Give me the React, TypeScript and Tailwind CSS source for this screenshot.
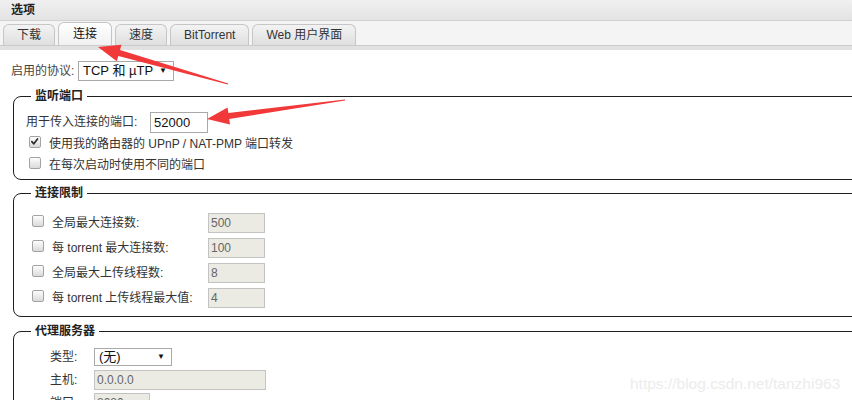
import React from "react";

type Pt = [number, number];

function arrowPoints(tail: Pt, tip: Pt, headLen = 22, headW = 17, shaftW = 6): string {
  const dx = tip[0] - tail[0];
  const dy = tip[1] - tail[1];
  const len = Math.hypot(dx, dy);
  const ux = dx / len;
  const uy = dy / len;
  const nx = -uy;
  const ny = ux;
  const bx = tip[0] - ux * headLen;
  const by = tip[1] - uy * headLen;
  const neck = (w: number): Pt[] => [
    [bx + (nx * w) / 2, by + (ny * w) / 2],
    [bx - (nx * w) / 2, by - (ny * w) / 2],
  ];
  const [s1, s2] = neck(shaftW);
  const [h1, h2] = neck(headW);
  const pts: Pt[] = [
    [tail[0] + nx * 0.6, tail[1] + ny * 0.6],
    s1,
    h1,
    tip,
    h2,
    s2,
    [tail[0] - nx * 0.6, tail[1] - ny * 0.6],
  ];
  return pts.map((p) => `${p[0].toFixed(1)},${p[1].toFixed(1)}`).join(" ");
}

function Checkbox({ checked = false }: { checked?: boolean }) {
  return (
    <span className="relative inline-block w-[12px] h-[12px] shrink-0 rounded-[2px] border border-[#a3a3a3] bg-linear-to-b from-[#fdfdfd] to-[#dadada]">
      {checked && (
        <svg viewBox="0 0 12 12" className="absolute left-[0px] top-[0px] w-[10px] h-[10px]">
          <path d="M2.2 5.6 L4.6 8.2 L9 2.4" fill="none" stroke="#2b2b2b" strokeWidth="2" strokeLinecap="round" strokeLinejoin="round" />
        </svg>
      )}
    </span>
  );
}

function Tab({ label, active = false }: { label: string; active?: boolean }) {
  return (
    <div
      className={
        active
          ? "h-[23px] px-[14px] flex items-center rounded-t-[6px] border border-b-0 border-[#c4c4c4] bg-linear-to-b from-[#ffffff] to-[#f1f1f1] text-[#111]"
          : "h-[21px] px-[13px] flex items-center rounded-t-[6px] border border-b-0 border-[#c6c6c6] bg-linear-to-b from-[#f3f3f3] to-[#dfdfdf] text-[#333]"
      }
    >
      {label}
    </div>
  );
}

function Legend({ children }: { children: React.ReactNode }) {
  return (
    <legend className="ml-[5px] px-[4px] text-[12px] leading-[14px] font-bold text-[#222]">{children}</legend>
  );
}

function Disabled({ value, w }: { value: string; w: string }) {
  return (
    <div className={`${w} h-[20px] border border-[#c3c3c3] bg-[#ebebe4] text-[12px] text-[#666] leading-[18px] pl-[2px]`}>
      {value}
    </div>
  );
}

export default function App() {
  const limits = [
    ["全局最大连接数:", "500"],
    ["每 torrent 最大连接数:", "100"],
    ["全局最大上传线程数:", "8"],
    ["每 torrent 上传线程最大值:", "4"],
  ];

  return (
    <div className="relative w-[852px] h-[400px] overflow-hidden bg-white font-['Liberation_Sans','Noto_Sans_CJK_SC',sans-serif] text-[12px] text-[#333]">
      {/* title bar */}
      <div className="h-[21px] pl-[11px] flex items-center bg-linear-to-b from-[#f0f0f0] to-[#e3e3e3] border-b border-[#d2d2d2] text-[12px] font-semibold text-[#222]">
        选项
      </div>

      {/* tabs */}
      <div className="h-[24px] bg-[#f4f4f4] pl-[3px] flex items-end gap-[3px]">
        <Tab label="下载" />
        <Tab label="连接" active />
        <Tab label="速度" />
        <Tab label="BitTorrent" />
        <Tab label="Web 用户界面" />
      </div>
      <div className="h-[5px] bg-[#e1e1e1] border-t border-[#cbcbcb]" />

      <div className="pl-[13px]">
        {/* protocol */}
        <div className="mt-[11px] flex items-center h-[20px]">
          <span className="ml-[-2px] w-[67px] text-[#444]">启用的协议:</span>
          <div className="w-[96px] h-[20px] border border-[#a9a9a9] flex items-center justify-between pl-[4px] pr-[6px] text-[13px] text-[#111]">
            <span>TCP 和 µTP</span>
            <span className="text-[8px]">▼</span>
          </div>
        </div>

        {/* listening port */}
        <fieldset className="mt-[8px] mr-[-30px] border border-[#1e1e1e] rounded-[8px] pl-[12px] pb-[4px]">
          <Legend>监听端口</Legend>
          <div className="mt-[8px] h-[22px] flex items-center">
            <span className="w-[124px]">用于传入连接的端口:</span>
            <div className="w-[58px] h-[21px] border border-[#a9a9a9] text-[13px] text-[#111] leading-[19px] pl-[3px]">52000</div>
          </div>
          <div className="h-[21px] flex items-center">
            <span className="ml-[3px]"><Checkbox checked /></span>
            <span className="ml-[8px]">使用我的路由器的 UPnP / NAT-PMP 端口转发</span>
          </div>
          <div className="h-[21px] flex items-center">
            <span className="ml-[3px]"><Checkbox /></span>
            <span className="ml-[8px]">在每次启动时使用不同的端口</span>
          </div>
        </fieldset>

        {/* connection limits */}
        <fieldset className="mt-[6px] mr-[-30px] border border-[#1e1e1e] rounded-[8px] pl-[12px] pb-[6px]">
          <Legend>连接限制</Legend>
          <div className="mt-[10px]">
            {limits.map(([label, value]) => (
              <div key={label} className="h-[25px] flex items-center">
                <span className="ml-[6px]"><Checkbox /></span>
                <span className="ml-[8px] w-[156px]">{label}</span>
                <Disabled value={value} w="w-[57px]" />
              </div>
            ))}
          </div>
        </fieldset>

        {/* proxy */}
        <fieldset className="mt-[7px] mr-[-30px] border border-[#1e1e1e] rounded-[8px] pl-[12px] pb-[6px]">
          <Legend>代理服务器</Legend>
          <div className="mt-[7px] h-[23px] flex items-center">
            <span className="ml-[24px] w-[44px]">类型:</span>
            <div className="w-[78px] h-[18px] border border-[#a9a9a9] flex items-center justify-between pl-[4px] pr-[6px] text-[13px] text-[#111]">
              <span>(无)</span>
              <span className="text-[8px]">▼</span>
            </div>
          </div>
          <div className="h-[23px] flex items-center">
            <span className="ml-[24px] w-[44px]">主机:</span>
            <Disabled value="0.0.0.0" w="w-[172px]" />
          </div>
          <div className="h-[23px] flex items-center">
            <span className="ml-[24px] w-[44px]">端口:</span>
            <Disabled value="8080" w="w-[56px]" />
          </div>
        </fieldset>
      </div>

      {/* watermark */}
      <div className="absolute left-[630px] top-[372px] text-[15.5px] text-[#ececec] font-['Liberation_Sans',sans-serif]">
        https://blog.csdn.net/tanzhi963
      </div>

      {/* annotation arrows */}
      <svg className="absolute inset-0 pointer-events-none" width="852" height="400">
        <polygon points={arrowPoints([228, 84], [98, 47])} fill="#f2393a" />
        <polygon points={arrowPoints([345, 100], [207, 119])} fill="#f2393a" />
      </svg>
    </div>
  );
}
